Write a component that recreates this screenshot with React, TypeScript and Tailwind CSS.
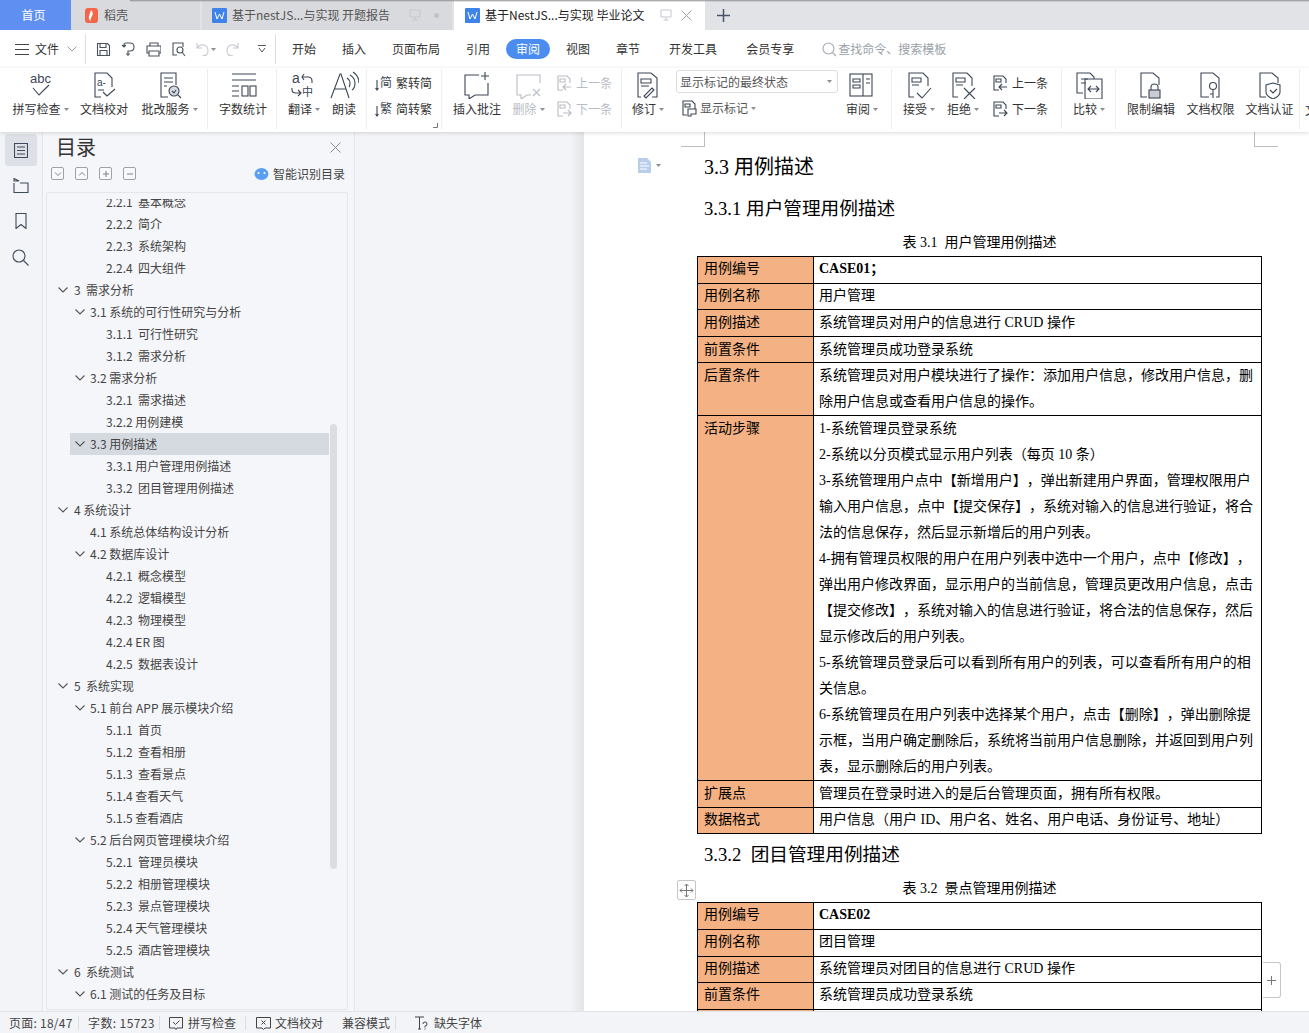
import React from "react";

const Ic = ({ w = 30, h = 28, c = "", children }: { w?: number; h?: number; c?: string; children: React.ReactNode }) => (
  <svg width={w} height={h} viewBox={`0 0 ${w} ${h}`} fill="none" stroke="currentColor" strokeWidth={1.1} className={c}>
    {children}
  </svg>
);

const Caret = ({ c = "" }: { c?: string }) => (
  <svg width="5" height="3" viewBox="0 0 5 3" className={c}><path d="M0 0h5L2.5 3z" fill="#8a8f99" /></svg>
);

const icons: Record<string, React.ReactNode> = {
  spell: (
    <Ic>
      <text x="4" y="12" fontSize="13" fill="currentColor" stroke="none" fontFamily="Liberation Sans">abc</text>
      <path d="M7 17l6 7 10-10" />
    </Ic>
  ),
  proof: (
    <Ic>
      <path d="M12 26H6V2h12l5 5v9" />
      <text x="8" y="15" fontSize="10" fill="currentColor" stroke="none" fontFamily="Liberation Sans">a-</text>
      <path d="M9 19h6M14 21l4 4 8-7" />
    </Ic>
  ),
  review: (
    <Ic>
      <path d="M13 26H6V2h15v12" />
      <path d="M9 7h9M9 11h9M9 15h3" />
      <circle cx="19" cy="20" r="5" fill="#d5dae2" />
      <path d="M17 20l2 2 2-3M23 24l3 3" />
    </Ic>
  ),
  count: (
    <Ic>
      <path d="M4 3h24M4 9h24M4 15h7M4 20h7M4 25h7" />
      <rect x="14" y="15" width="6" height="10" />
      <rect x="22" y="15" width="6" height="10" />
    </Ic>
  ),
  trans: (
    <Ic>
      <text x="3" y="12" fontSize="14" fill="currentColor" stroke="none" fontFamily="Liberation Sans">a</text>
      <text x="13" y="25" fontSize="11" fill="currentColor" stroke="none" fontFamily="Noto Sans CJK SC">中</text>
      <path d="M15 3l-2 3 2 3M13 6h6q4 0 4 4v2M3 17v2q0 3 4 3h4M9 19l3 3-3 3" />
    </Ic>
  ),
  read: (
    <Ic>
      <path d="M2 27L11 3h1l8 24M6 18h11" />
      <path d="M18 7q3 2 3 5t-1 4M21 4q5 3 5 8t-3 7M24 1q6 4 6 11" />
    </Ic>
  ),
  comment: (
    <Ic>
      <path d="M17 4H3v20h4v4l6-4h13V12" />
      <path d="M23 1v8M19 5h8" />
    </Ic>
  ),
  del: (
    <Ic>
      <path d="M26 12V4H3v20h4v4l6-4h4" />
      <path d="M19 18l7 7M26 18l-7 7" />
    </Ic>
  ),
  track: (
    <Ic>
      <path d="M8 26H5V2h13l6 5v19h-5M8 8h10v4H8zM8 15h8" />
      <path d="M11 25l2 2 8-8-2-2z" />
    </Ic>
  ),
  book: (
    <Ic>
      <rect x="3" y="3" width="22" height="22" />
      <path d="M16 3v22M6 8h7v3H6zM6 14h7v3H6zM19 8h4M19 12h4" />
    </Ic>
  ),
  accept: (
    <Ic>
      <path d="M10 26H5V2h14l5 5v8M8 7h9v4H8zM8 14h7" />
      <path d="M13 22l5 5 9-10" />
    </Ic>
  ),
  reject: (
    <Ic>
      <path d="M10 26H5V2h14l5 5v8M8 7h9v4H8zM8 14h7" />
      <path d="M16 17l11 11M27 17L16 28" />
    </Ic>
  ),
  compare: (
    <Ic>
      <path d="M9 22H3V2h13l4 4v2M7 8h7M7 12h5" />
      <path d="M11 8h17v20H11z" />
      <path d="M14 18h11M17 15l-3 3 3 3M22 15l3 3-3 3" />
    </Ic>
  ),
  lock: (
    <Ic>
      <path d="M11 26H5V2h12l6 5v7" />
      <rect x="13" y="19" width="11" height="8" fill="#c9ccd2" />
      <path d="M15 19v-3q0-3 3.500-3t3.500 3v3" />
    </Ic>
  ),
  key: (
    <Ic>
      <path d="M13 26H5V2h12l6 5v19h-3" />
      <circle cx="17" cy="15" r="3.500" />
      <path d="M17 18.500V27M17 23h-3" />
    </Ic>
  ),
  shield: (
    <Ic>
      <path d="M11 26H5V2h12l6 5v5" />
      <path d="M18 12l7 2v7q0 4-7 7-7-3-7-7v-7z" />
      <path d="M15 19l3 3 4-4" />
    </Ic>
  ),
};

const Cell = ({ w, ml = 0, icon, label, caret, dim }: { w: number; ml?: number; icon: string; label: string; caret?: boolean; dim?: boolean }) => (
  <div className={`flex flex-col items-center shrink-0 ${dim ? "text-[#b8bcc4]" : "text-[#3c4656]"}`} style={{ width: w, marginLeft: ml }}>
    <div className="h-[28px] flex items-center justify-center mt-[2px]">{icons[icon]}</div>
    <div className={`flex items-center gap-[3px] mt-[2px] text-[12px] leading-[16px] whitespace-nowrap ${dim ? "text-[#b8bcc4]" : "text-[#333]"}`}>
      {label}
      {caret && <Caret />}
    </div>
  </div>
);

const Small = ({ label, dim, kind }: { label: string; dim?: boolean; kind: string }) => (
  <div className={`flex items-center gap-[3px] h-[26px] text-[12px] whitespace-nowrap ${dim ? "text-[#b8bcc4]" : "text-[#333]"}`}>
    <span className={dim ? "" : "text-[#3c4656]"}>
      <Ic w={18} h={18}>
        {kind === "prev" && <path d="M8 16H3V2h9l3 3v4M5 5h5v3H5zM16 13H8M11 10l-3 3 3 3" />}
        {kind === "next" && <path d="M8 16H3V2h9l3 3v4M5 5h5v3H5zM8 13h8M13 10l3 3-3 3" />}
        {kind === "t2s" && (
          <>
            <text x="5" y="13" fontSize="12" fill="currentColor" stroke="none" fontFamily="Noto Sans CJK SC">简</text>
            <path d="M2 6v10M0.500 14l1.500 2 1.500-2" />
          </>
        )}
        {kind === "s2t" && (
          <>
            <text x="5" y="13" fontSize="12" fill="currentColor" stroke="none" fontFamily="Noto Sans CJK SC">繁</text>
            <path d="M2 6v10M0.500 14l1.500 2 1.500-2" />
          </>
        )}
      </Ic>
    </span>
    {label}
  </div>
);

const Sep = () => <div className="w-px h-[30px] bg-[#dcdee2] shrink-0" />;

const Group = ({ w, children, pl = 0 }: { w: number; children: React.ReactNode; pl?: number }) => (
  <div className="flex shrink-0 h-[60px] border-r border-[#eceef0] relative" style={{ width: w, paddingLeft: pl }}>
    {children}
  </div>
);

const toc: [number, string, boolean?][] = [
  [3, "2.2.1  基本概念"], [3, "2.2.2  简介"], [3, "2.2.3  系统架构"], [3, "2.2.4  四大组件"],
  [1, "3  需求分析"], [2, "3.1 系统的可行性研究与分析"], [3, "3.1.1  可行性研究"], [3, "3.1.2  需求分析"],
  [2, "3.2 需求分析"], [3, "3.2.1  需求描述"], [3, "3.2.2 用例建模"], [2, "3.3 用例描述", true],
  [3, "3.3.1 用户管理用例描述"], [3, "3.3.2  团目管理用例描述"], [1, "4 系统设计"], [4, "4.1 系统总体结构设计分析"],
  [2, "4.2 数据库设计"], [3, "4.2.1  概念模型"], [3, "4.2.2  逻辑模型"], [3, "4.2.3  物理模型"],
  [3, "4.2.4 ER 图"], [3, "4.2.5  数据表设计"], [1, "5  系统实现"], [2, "5.1 前台 APP 展示模块介绍"],
  [3, "5.1.1  首页"], [3, "5.1.2  查看相册"], [3, "5.1.3  查看景点"], [3, "5.1.4 查看天气"],
  [3, "5.1.5 查看酒店"], [2, "5.2 后台网页管理模块介绍"], [3, "5.2.1  管理员模块"], [3, "5.2.2  相册管理模块"],
  [3, "5.2.3  景点管理模块"], [3, "5.2.4 天气管理模块"], [3, "5.2.5  酒店管理模块"], [1, "6  系统测试"],
  [2, "6.1 测试的任务及目标"],
];

const Chev = () => (
  <svg width="10" height="6" viewBox="0 0 10 6" fill="none" stroke="#555" strokeWidth="1.1" className="shrink-0"><path d="M.5.5L5 5 9.500.5" /></svg>
);

const TocRow = ({ level, text, active }: { level: number; text: string; active?: boolean }) => {
  const pad = level === 1 ? "pl-[11px] gap-[6px]" : level === 3 ? "pl-[59px]" : level === 4 ? "pl-[43px]" : "pl-[28px] gap-[5px]";
  return (
    <div className={`h-[22px] flex items-center whitespace-pre text-[12px] text-[#444] ${pad} ${active ? "relative" : ""}`}>
      {active && <div className="absolute left-[23px] w-[259px] top-0 bottom-0 bg-[#d5d9e0]" />}
      {(level === 1 || level === 2) && <span className="relative"><Chev /></span>}
      <span className="relative">{text}</span>
    </div>
  );
};

type Row = { l: string; h: number; r: React.ReactNode[]; bold?: boolean; low?: boolean };

const t1: Row[] = [
  { l: "用例编号", h: 27, r: ["CASE01；"], bold: true },
  { l: "用例名称", h: 26, r: ["用户管理"] },
  { l: "用例描述", h: 27, r: ["系统管理员对用户的信息进行 CRUD 操作"], low: true },
  { l: "前置条件", h: 26, r: ["系统管理员成功登录系统"], low: true },
  { l: "后置条件", h: 52, r: ["系统管理员对用户模块进行了操作：添加用户信息，修改用户信息，删", "除用户信息或查看用户信息的操作。"], low: true },
  {
    l: "活动步骤",
    h: 365,
    low: true,
    r: [
      "1-系统管理员登录系统",
      "2-系统以分页模式显示用户列表（每页 10 条）",
      "3-系统管理用户点中【新增用户】，弹出新建用户界面，管理权限用户",
      "输入用户信息，点中【提交保存】，系统对输入的信息进行验证，将合",
      "法的信息保存，然后显示新增后的用户列表。",
      "4-拥有管理员权限的用户在用户列表中选中一个用户，点中【修改】，",
      "弹出用户修改界面，显示用户的当前信息，管理员更改用户信息，点击",
      "【提交修改】，系统对输入的信息进行验证，将合法的信息保存，然后",
      "显示修改后的用户列表。",
      "5-系统管理员登录后可以看到所有用户的列表，可以查看所有用户的相",
      "关信息。",
      "6-系统管理员在用户列表中选择某个用户，点击【删除】，弹出删除提",
      "示框，当用户确定删除后，系统将当前用户信息删除，并返回到用户列",
      "表，显示删除后的用户列表。",
    ],
  },
  { l: "扩展点", h: 27, r: ["管理员在登录时进入的是后台管理页面，拥有所有权限。"], low: true },
  { l: "数据格式", h: 26, r: ["用户信息（用户 ID、用户名、姓名、用户电话、身份证号、地址）"] },
];

const t2: Row[] = [
  { l: "用例编号", h: 27, r: ["CASE02"], bold: true },
  { l: "用例名称", h: 27, r: ["团目管理"] },
  { l: "用例描述", h: 26, r: ["系统管理员对团目的信息进行 CRUD 操作"] },
  { l: "前置条件", h: 27, r: ["系统管理员成功登录系统"] },
  { l: "", h: 26, r: [""] },
];

const DocTable = ({ rows }: { rows: Row[] }) => (
  <table className="w-[565px] -ml-[7px] border-collapse table-fixed text-[14px] text-black [text-spacing-trim:space-all]">
    <tbody>
      {rows.map((row, i) => (
        <tr key={i} style={{ height: row.h }}>
          <td className={`w-[116px] border border-black bg-[#f4b183] align-top pl-[6px] ${row.low ? "leading-[25px]" : "leading-[24px]"}`}>{row.l}</td>
          <td className={`border border-black align-top pl-[5px] whitespace-nowrap ${row.bold ? "font-bold" : ""}`}>
            {row.r.map((t, j) => (
              <div key={j} className={row.r.length > 1 ? "leading-[26px]" : row.low ? "leading-[25px]" : "leading-[24px]"}>{t}</div>
            ))}
          </td>
        </tr>
      ))}
    </tbody>
  </table>
);

const Mon = () => (
  <svg width="12" height="12" viewBox="0 0 12 12" fill="none" stroke="#c3c7cf" strokeWidth="1"><path d="M1 1h10v7H1zM6 8v3M3.500 11h5" /></svg>
);

const WIcon = () => (
  <div className="w-[15px] h-[15px] rounded-[1px] bg-[#3f83ea] flex items-center justify-center">
    <svg width="11" height="9" viewBox="0 0 11 9" fill="none" stroke="#fff" strokeWidth="1"><path d="M1 1l2 7 2.500-5L8 8l2-7" /></svg>
  </div>
);

const TabBtn = ({ d }: { d: React.ReactNode }) => (
  <div className="w-[13px] h-[13px] border border-[#9ca1a9] rounded-[2px] flex items-center justify-center bg-[#f8f9fa]">
    <svg width="10" height="10" viewBox="0 0 10 10" fill="none" stroke="#7b808a" strokeWidth="1">{d}</svg>
  </div>
);

export default function App() {
  return (
    <div className="w-[1309px] h-[1033px] overflow-hidden flex flex-col bg-white relative font-['Noto_Sans_CJK_SC',sans-serif]">
      {/* Title tabs */}
      <div className="h-[30px] shrink-0 flex bg-[#e2e3e7] text-[12px] relative">
        <div className="w-[71px] bg-[#5f8ff0] text-white flex items-center justify-center pr-[4px]">首页</div>
        <div className="w-[129px] bg-[#d9dade] flex items-center gap-[6px] pl-[14px] text-[#555]">
          <svg width="13" height="15" viewBox="0 0 13 15"><path d="M3 0h7q3 0 3 3v9q0 3-3 3H3q-3 0-3-3V3q0-3 3-3z" fill="#f4664a" /><path d="M6 2q3 3 1 6t-1 5q-3-2-2-5t2-6z" fill="#fff" /></svg>
          稻壳
        </div>
        <div className="w-[250px] ml-[2px] bg-[#d9dade] flex items-center pl-[10px] text-[#555]">
          <WIcon />
          <span className="ml-[5px] whitespace-nowrap">基于nestJS...与实现 开题报告</span>
          <span className="ml-[19px]"><Mon /></span>
          <span className="ml-[13px] w-[5px] h-[5px] rounded-full bg-[#bfc3cb]" />
        </div>
        <div className="w-[251px] ml-[2px] bg-white flex items-center pl-[11px] text-[#222]">
          <WIcon />
          <span className="ml-[5px] whitespace-nowrap">基于NestJS...与实现 毕业论文</span>
          <span className="ml-[16px]"><Mon /></span>
          <svg className="ml-[9px]" width="11" height="11" viewBox="0 0 11 11" fill="none" stroke="#9aa0aa" strokeWidth="1"><path d="M.5.5l10 10M10.500.5l-10 10" /></svg>
        </div>
        <svg className="ml-[12px] self-center" width="13" height="13" viewBox="0 0 13 13" fill="none" stroke="#4a5468" strokeWidth="1.5"><path d="M6.500 0v13M0 6.500h13" /></svg>
        <div className="absolute left-[130px] right-0 top-0 h-[2px] bg-gradient-to-b from-[#8e8f92] to-transparent" />
      </div>

      {/* Menu row */}
      <div className="h-[38px] shrink-0 flex items-center text-[12px] text-[#333] pl-[15px]">
        <svg width="14" height="11" viewBox="0 0 14 11" stroke="#444" strokeWidth="1"><path d="M0 .5h14M0 5.500h14M0 10.500h14" /></svg>
        <span className="ml-[6px]">文件</span>
        <svg className="ml-[8px] mr-[8px]" width="10" height="6" viewBox="0 0 10 6" fill="none" stroke="#a0a4ac" strokeWidth="1"><path d="M.5.5L5 5 9.500.5" /></svg>
        <Sep />
        <div className="flex items-center gap-[10px] pl-[10px] text-[#4a5260]">
          <Ic w={15} h={15}><path d="M1.500 1.500h10l2 2v10h-12zM4 1.500v4h6v-4M4 13.500v-5h7v5" /></Ic>
          <Ic w={15} h={15}><path d="M1 3l2 2 2-2M3 5V3q0-2 2-2h4q4 0 4 4t-4 4H7v5M5 12h4" /></Ic>
          <Ic w={15} h={15}><path d="M4 4V1h8v3M3 11H1V4h14v7h-2M3 9h10v5H3z" /></Ic>
          <Ic w={15} h={15}><path d="M6 13H2V1h10v4M9 11a3 3 0 100-6 3 3 0 000 6zM11 10l3 4" /></Ic>
        </div>
        <div className="flex items-center pl-[10px] text-[#c5c8ce]">
          <Ic w={13} h={14}><path d="M1 1v5h5M1 6q3-4 7-3t4 6-6 5" /></Ic>
          <Caret c="ml-[2px]" />
          <Ic w={13} h={14} c="ml-[10px]"><path d="M12 1v5H7M12 6q-3-4-7-3t-4 6 6 5" /></Ic>
        </div>
        <svg className="ml-[19px] mr-[9px]" width="8" height="8" viewBox="0 0 8 8" fill="none" stroke="#555" strokeWidth="1"><path d="M0 .5h8M1 3l3 4 3-4" /></svg>
        <Sep />
        <div className="flex items-center pl-[3px]">
          {["开始", "插入", "页面布局", "引用"].map((t) => (
            <span key={t} className="px-[13px]">{t}</span>
          ))}
          <span className="mx-[3px] w-[44px] h-[20px] rounded-full bg-[#4a8cf0] text-white flex items-center justify-center">审阅</span>
          {["视图", "章节"].map((t) => (
            <span key={t} className="px-[13px]">{t}</span>
          ))}
          <span className="ml-[3px] px-[13px]">开发工具</span>
          <span className="ml-[3px] px-[13px]">会员专享</span>
        </div>
        <svg className="ml-[15px]" width="15" height="15" viewBox="0 0 15 15" fill="none" stroke="#a3a8b2" strokeWidth="1.1"><circle cx="6.500" cy="6.500" r="5.500" /><path d="M10.500 10.500l3.500 3.500" /></svg>
        <span className="ml-[1px] text-[#9a9fa9]">查找命令、搜索模板</span>
      </div>

      {/* Ribbon */}
      <div className="h-[64px] shrink-0 flex pt-[1px] overflow-hidden shadow-[0_1px_4px_rgba(0,0,0,0.14)] z-10 bg-white relative">
        <Group w={208} pl={8}>
          <Cell w={65} icon="spell" label="拼写检查" caret />
          <Cell w={62} icon="proof" label="文档校对" />
          <Cell w={69} icon="review" label="批改服务" caret />
        </Group>
        <Group w={69} pl={5}>
          <Cell w={60} icon="count" label="字数统计" />
        </Group>
        <Group w={90} pl={7}>
          <Cell w={40} icon="trans" label="翻译" caret />
          <Cell w={40} icon="read" label="朗读" />
        </Group>
        <Group w={75} pl={8}>
          <div className="flex flex-col pt-[1px]">
            <Small kind="t2s" label="繁转简" />
            <Small kind="s2t" label="简转繁" />
          </div>
          <svg className="absolute right-[3px] bottom-[1px]" width="5" height="5" viewBox="0 0 5 5" fill="none" stroke="#777"><path d="M0 4.500h4.500V0" /></svg>
        </Group>
        <Group w={180} pl={5}>
          <Cell w={60} icon="comment" label="插入批注" />
          <Cell w={43} icon="del" label="删除" caret dim />
          <div className="flex flex-col pt-[1px] ml-[5px]">
            <Small kind="prev" label="上一条" dim />
            <Small kind="next" label="下一条" dim />
          </div>
        </Group>
        <Group w={270} pl={6}>
          <Cell w={40} icon="track" label="修订" caret />
          <div className="w-[162px] ml-[8px] flex flex-col shrink-0">
            <div className="h-[23px] mt-[1px] border border-[#dcdee2] rounded-[3px] flex items-center justify-between pl-[3px] pr-[5px] text-[12px] text-[#555]">
              显示标记的最终状态
              <Caret />
            </div>
            <div className="flex items-center gap-[3px] h-[24px] mt-[3px] pl-[5px] text-[12px] text-[#555]">
              <span className="text-[#3c4656]"><Ic w={16} h={18}><path d="M6 16H2V2h9l3 3v5M4 5h5v3H4zM7 10h8v5h-5v2H7z" /></Ic></span>
              显示标记
              <Caret />
            </div>
          </div>
          <Cell w={40} ml={4} icon="book" label="审阅" caret />
        </Group>
        <Group w={170} pl={7}>
          <Cell w={40} icon="accept" label="接受" caret />
          <Cell w={40} ml={4} icon="reject" label="拒绝" caret />
          <div className="flex flex-col pt-[1px] ml-[8px]">
            <Small kind="prev" label="上一条" />
            <Small kind="next" label="下一条" />
          </div>
        </Group>
        <Group w={54} pl={7}>
          <Cell w={40} icon="compare" label="比较" caret />
        </Group>
        <Group w={184} pl={5}>
          <Cell w={60} icon="lock" label="限制编辑" />
          <Cell w={59} icon="key" label="文档权限" />
          <Cell w={59} icon="shield" label="文档认证" />
        </Group>
        <div className="pl-[5px] pt-[33px] text-[12px] leading-[16px] text-[#333] whitespace-nowrap">文档</div>
      </div>

      {/* Main */}
      <div className="flex-1 min-h-0 flex">
        {/* Rail */}
        <div className="w-[43px] shrink-0 bg-[#f3f4f7] border-r border-[#e3e5e9] flex flex-col items-center pt-[2px] pr-[1px] text-[#3f4a5a]">
          <div className="w-[32px] h-[32px] rounded-[3px] bg-[#dde0e6] flex items-center justify-center">
            <Ic w={14} h={15}><path d="M.5.5h13v14H.5zM3 4h8M3 7.500h8M3 11h8" /></Ic>
          </div>
          <div className="h-[36px] mt-[1px] flex items-center"><Ic w={16} h={15}><path d="M1 .5l5 2.500H1zM1 5v9.500h14V5H7" /></Ic></div>
          <div className="h-[36px] flex items-center"><Ic w={12} h={16}><path d="M1 .5h10v15l-5-4-5 4z" /></Ic></div>
          <div className="h-[36px] flex items-center"><Ic w={17} h={17}><circle cx="7" cy="7" r="6" /><path d="M11.500 11.500l5 5" /></Ic></div>
        </div>

        {/* TOC panel */}
        <div className="w-[312px] shrink-0 bg-[#f5f6f9] border-r border-[#e3e5e9] flex flex-col pl-[3px] pr-[6px]">
          <div className="flex items-center justify-between h-[30px] pl-[10px] pr-[7px]">
            <span className="text-[20px] leading-[28px] text-[#333]">目录</span>
            <svg width="11" height="11" viewBox="0 0 11 11" fill="none" stroke="#888" strokeWidth="1"><path d="M.5.5l10 10M10.500.5l-10 10" /></svg>
          </div>
          <div className="h-[30px] flex items-center pl-[5px] pb-[7px]">
            <div className="flex gap-[11px]">
              <TabBtn d={<path d="M2 3.500l3 3 3-3" />} />
              <TabBtn d={<path d="M2 6.500l3-3 3 3" />} />
              <TabBtn d={<path d="M5 2v6M2 5h6" />} />
              <TabBtn d={<path d="M2 5h6" />} />
            </div>
            <svg className="ml-[118px]" width="15" height="12" viewBox="0 0 15 12"><ellipse cx="7.500" cy="6" rx="7" ry="6" fill="#5aa0f2" /><circle cx="4.500" cy="5" r="1" fill="#fff" /><circle cx="10.500" cy="5" r="1" fill="#fff" /></svg>
            <span className="ml-[4px] text-[12px] text-[#444] whitespace-nowrap">智能识别目录</span>
          </div>
          <div className="flex-1 min-h-0 border border-[#e4e6ea] rounded-[2px] mb-[1px] pt-[6px] relative overflow-hidden">
            <div className="h-full overflow-hidden">
              <div className="-mt-[8px] isolate">
                {toc.map(([l, t, a]) => (
                  <TocRow key={t} level={l} text={t} active={a} />
                ))}
              </div>
            </div>
            <div className="absolute left-[283px] top-[231px] w-[7px] h-[445px] rounded-full bg-[#dcdde1]" />
          </div>
        </div>

        {/* Gutter */}
        <div className="w-[229px] shrink-0 bg-gradient-to-r from-[#f3f4f7] from-[94%] to-[#e4e5e9]" />

        {/* Page */}
        <div className="flex-1 min-w-0 bg-white relative overflow-hidden pl-[120px] pt-[21px] font-['Liberation_Serif','Noto_Sans_CJK_SC',serif] text-black">
          <div className="absolute left-[97px] top-0 w-[24px] h-[15px] border-r border-b border-[#bbbdc2]" />
          <div className="absolute left-[670px] top-0 w-[24px] h-[15px] border-l border-b border-[#bbbdc2]" />
          <div className="absolute left-[54px] top-[26px] flex items-center gap-[5px]">
            <svg width="13" height="15" viewBox="0 0 13 15"><path d="M0 0h9l4 4v11H0z" fill="#b9cdec" /><path d="M2 5h7M2 8h9M2 11h7" stroke="#fff" /></svg>
            <Caret />
          </div>
          <h2 className="text-[20px] leading-[28px] whitespace-pre">3.3 用例描述</h2>
          <h3 className="text-[18.67px] leading-[28px] mt-[14px] whitespace-pre">3.3.1 用户管理用例描述</h3>
          <div className="w-[551px] text-center text-[14px] leading-[20px] mt-[10px] whitespace-pre">表 3.1  用户管理用例描述</div>
          <div className="mt-[3px]"><DocTable rows={t1} /></div>
          <h3 className="text-[18.67px] leading-[28px] mt-[7px] whitespace-pre">3.3.2  团目管理用例描述</h3>
          <div className="w-[551px] text-center text-[14px] leading-[20px] mt-[10px] whitespace-pre">表 3.2  景点管理用例描述</div>
          <div className="mt-[3px]"><DocTable rows={t2} /></div>
          <div className="absolute left-[93px] top-[748px] w-[19px] h-[20px] bg-white border border-[#c4c6cb] rounded-[2px] flex items-center justify-center">
            <svg width="15" height="15" viewBox="0 0 15 15" fill="none" stroke="#777" strokeWidth="1"><path d="M7.500 1v13M1 7.500h13M5.500 3l2-2 2 2M5.500 12l2 2 2-2M3 5.500l-2 2 2 2M12 5.500l2 2-2 2" /></svg>
          </div>
          <div className="absolute left-[679px] top-[830px] w-[18px] h-[36px] bg-white border border-[#c4c6cb] border-l-0 rounded-r-[3px] flex items-center justify-center">
            <svg width="9" height="9" viewBox="0 0 9 9" stroke="#777" strokeWidth="1"><path d="M4.500 0v9M0 4.500h9" /></svg>
          </div>
        </div>
      </div>

      {/* Status bar */}
      <div className="h-[22px] shrink-0 bg-[#f3f4f7] border-t border-[#e1e3e7] flex items-center text-[12px] text-[#444] z-10 whitespace-pre">
        <span className="ml-[9px] w-[63px] tracking-[0.25px]">页面: 18/47</span>
        <span className="ml-[6px] w-px h-[14px] bg-[#dcdee2]" />
        <span className="ml-[9px] w-[66px] tracking-[0.4px]">字数: 15723</span>
        <span className="ml-[5px] w-px h-[14px] bg-[#dcdee2]" />
        <svg className="ml-[9px]" width="14" height="14" viewBox="0 0 14 14" fill="none" stroke="#444"><path d="M.5 1.500h13V12H8l-1 1.500L6 12H.5zM4 6l2.500 2.500 4-4" /></svg>
        <span className="ml-[5px]">拼写检查</span>
        <span className="ml-[9px] w-px h-[14px] bg-[#dcdee2]" />
        <svg className="ml-[10px]" width="15" height="14" viewBox="0 0 15 14" fill="none" stroke="#444"><path d="M.5 1.500h14V12H9l-1.500 1.500L6 12H.5zM5.500 4.500l4 4M9.500 4.500l-4 4" /></svg>
        <span className="ml-[4px]">文档校对</span>
        <span className="ml-[19px]">兼容模式</span>
        <span className="ml-[5px] w-px h-[14px] bg-[#dcdee2]" />
        <svg className="ml-[19px]" width="13" height="14" viewBox="0 0 13 14" fill="none" stroke="#444"><path d="M0 1h9M4.500 1v12M3 13h3M8 8q0-2 2-2t2 2-2 2v1.500M10 12.500v1" /></svg>
        <span className="ml-[6px]">缺失字体</span>
      </div>
    </div>
  );
}
